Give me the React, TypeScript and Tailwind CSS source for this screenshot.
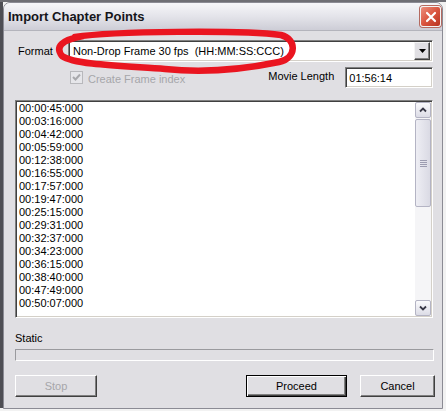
import React from 'react'

const times = [
  '00:00:45:000', '00:03:16:000', '00:04:42:000', '00:05:59:000',
  '00:12:38:000', '00:16:55:000', '00:17:57:000', '00:19:47:000',
  '00:25:15:000', '00:29:31:000', '00:32:37:000', '00:34:23:000',
  '00:36:15:000', '00:38:40:000', '00:47:49:000', '00:50:07:000',
]

const sunken =
  'border border-t-[#808080] border-l-[#808080] border-b-white border-r-white shadow-[inset_1px_1px_0_#404040,inset_-1px_-1px_0_#d4d0c8]'

function ScrollBtn({ up }: { up?: boolean }) {
  return (
    <div className="w-[16px] h-[16px] rounded-[2px] border border-[#b4b4c4] bg-gradient-to-b from-[#fbfbfd] to-[#dcdce6] flex items-center justify-center">
      <svg width="8" height="6" viewBox="0 0 8 6">
        <polyline
          points={up ? '1,4.5 4,1.5 7,4.5' : '1,1.5 4,4.5 7,1.5'}
          fill="none"
          stroke="#3a3a48"
          strokeWidth="1.8"
        />
      </svg>
    </div>
  )
}

export default function App() {
  return (
    <div
      className="w-[446px] h-[411px] bg-[#f2f2f2] flex flex-col overflow-hidden relative text-[11px] text-black"
      style={{ fontFamily: '"Liberation Sans", Arial, sans-serif' }}
    >
      {/* outer desktop edges */}
      <div className="h-[2px] bg-[#6e6e74] shrink-0" />
      <div className="flex flex-1">
        <div className="w-[3px] h-[406px] bg-[#4e4e54] shrink-0" />

        {/* dialog */}
        <div className="w-[440px] h-[407px] border border-[#8b8b94] rounded-t-[7px] overflow-hidden flex flex-col bg-[#e0dfe3]">
          {/* title bar */}
          <div className="h-[28px] shrink-0 flex items-center justify-between pl-[4px] pr-[1px] bg-gradient-to-b from-[#f6f6f9] via-[#e4e4ea] to-[#cdcdd6] border-b border-[#b4b4bc]">
            <span className="font-bold text-[13px] text-[#15151a]">Import Chapter Points</span>
            <div className="w-[21px] h-[21px] rounded-[3px] border border-[#f4f4f4] bg-gradient-to-br from-[#eb8e7e] via-[#da553f] to-[#b8321f] flex items-center justify-center shadow-[0_0_0_1px_#b46a60]">
              <svg width="12" height="12" viewBox="0 0 12 12">
                <path d="M2 2 L10 10 M10 2 L2 10" stroke="white" strokeWidth="2.2" strokeLinecap="round" />
              </svg>
            </div>
          </div>

          {/* body */}
          <div className="flex-1 flex flex-col pl-[11px] pt-[9px]">
            {/* format row */}
            <div className="flex items-center h-[22px]">
              <span className="w-[53px] pl-[3px]">Format</span>
              <div className={`w-[365px] h-[22px] bg-white flex items-center justify-between pl-[4px] pr-[2px] ${sunken}`}>
                <span>Non-Drop Frame 30 fps&nbsp; (HH:MM:SS:CCC)</span>
                <div className="w-[16px] h-[18px] bg-[#e0dfe3] border border-t-[#f4f4f4] border-l-[#f4f4f4] border-b-[#404040] border-r-[#404040] shadow-[inset_-1px_-1px_0_#808080] flex items-center justify-center">
                  <svg width="7" height="4" viewBox="0 0 7 4">
                    <path d="M0 0 H7 L3.5 4 Z" fill="black" />
                  </svg>
                </div>
              </div>
            </div>

            {/* checkbox / movie length row */}
            <div className="flex items-center h-[21px] mt-[5px]">
              <div className="ml-[55px] w-[13px] h-[13px] border border-[#b8b8bc] bg-[#e6e6ea] flex items-center justify-center">
                <svg width="9" height="9" viewBox="0 0 9 9">
                  <polyline points="1,4 3.5,6.5 8,1.5" fill="none" stroke="#a8a8ac" strokeWidth="2" />
                </svg>
              </div>
              <span className="ml-[5px] text-[#a6a6aa] mt-[3px]">Create Frame index</span>
              <span className="ml-[83px] mt-[-2px]">Movie Length</span>
              <div className={`ml-[11px] w-[88px] h-[21px] bg-white pl-[3px] pt-[2px] ${sunken}`}>01:56:14</div>
            </div>

            {/* list */}
            <div className={`mt-[12px] w-[418px] h-[218px] bg-white flex ${sunken}`}>
              <div className="flex-1 pl-[3px] pt-[1px] leading-[13px]">
                {times.map((t) => (
                  <div key={t}>{t}</div>
                ))}
              </div>
              <div className="w-[16px] mt-[1px] mb-[1px] mr-[1px] bg-[#f5f5f7] flex flex-col">
                <ScrollBtn up />
                <div className="h-[88px] mt-[1px] rounded-[2px] border border-[#b4b4c4] bg-gradient-to-r from-[#eeeef4] to-[#dadae4] flex flex-col items-center justify-center gap-[1px]">
                  <div className="w-[7px] h-[1px] bg-[#9c9cb0]" />
                  <div className="w-[7px] h-[1px] bg-[#9c9cb0]" />
                  <div className="w-[7px] h-[1px] bg-[#9c9cb0]" />
                  <div className="w-[7px] h-[1px] bg-[#9c9cb0]" />
                </div>
                <div className="flex-1" />
                <ScrollBtn />
              </div>
            </div>

            {/* static + progress */}
            <div className="mt-[14px] leading-[13px]">Static</div>
            <div className="mt-[4px] w-[419px] h-[12px] border border-t-[#9a9a9e] border-l-[#9a9a9e] border-b-white border-r-white" />

            {/* buttons */}
            <div className="mt-[14px] flex h-[22px]">
              <div className="w-[82px] h-[22px] flex items-center justify-center text-[#a6a6aa] border border-t-white border-l-white border-b-[#404040] border-r-[#404040] shadow-[inset_-1px_-1px_0_#808080]">
                Stop
              </div>
              <div className="ml-[149px] w-[101px] h-[22px] flex items-center justify-center border border-black shadow-[inset_1px_1px_0_#fff,inset_-1px_-1px_0_#404040,inset_-2px_-2px_0_#808080]">
                Proceed
              </div>
              <div className="ml-[13px] w-[75px] h-[22px] flex items-center justify-center border border-t-white border-l-white border-b-[#404040] border-r-[#404040] shadow-[inset_-1px_-1px_0_#808080]">
                Cancel
              </div>
            </div>
          </div>
        </div>
      </div>

      {/* red marker ellipse drawn over the format box */}
      <svg className="absolute left-[53px] top-[28px] pointer-events-none" width="246" height="48" viewBox="0 0 246 48">
        <path
          d="M22 9 C60 3 190 2 228 7 C244 11 244 30 226 34 C192 41 150 45 112 41 C72 38 22 37 9 28 C2 19 8 12 30 8"
          fill="none"
          stroke="#ea1520"
          strokeWidth="6.5"
          strokeLinecap="round"
          strokeLinejoin="round"
        />
      </svg>
    </div>
  )
}
